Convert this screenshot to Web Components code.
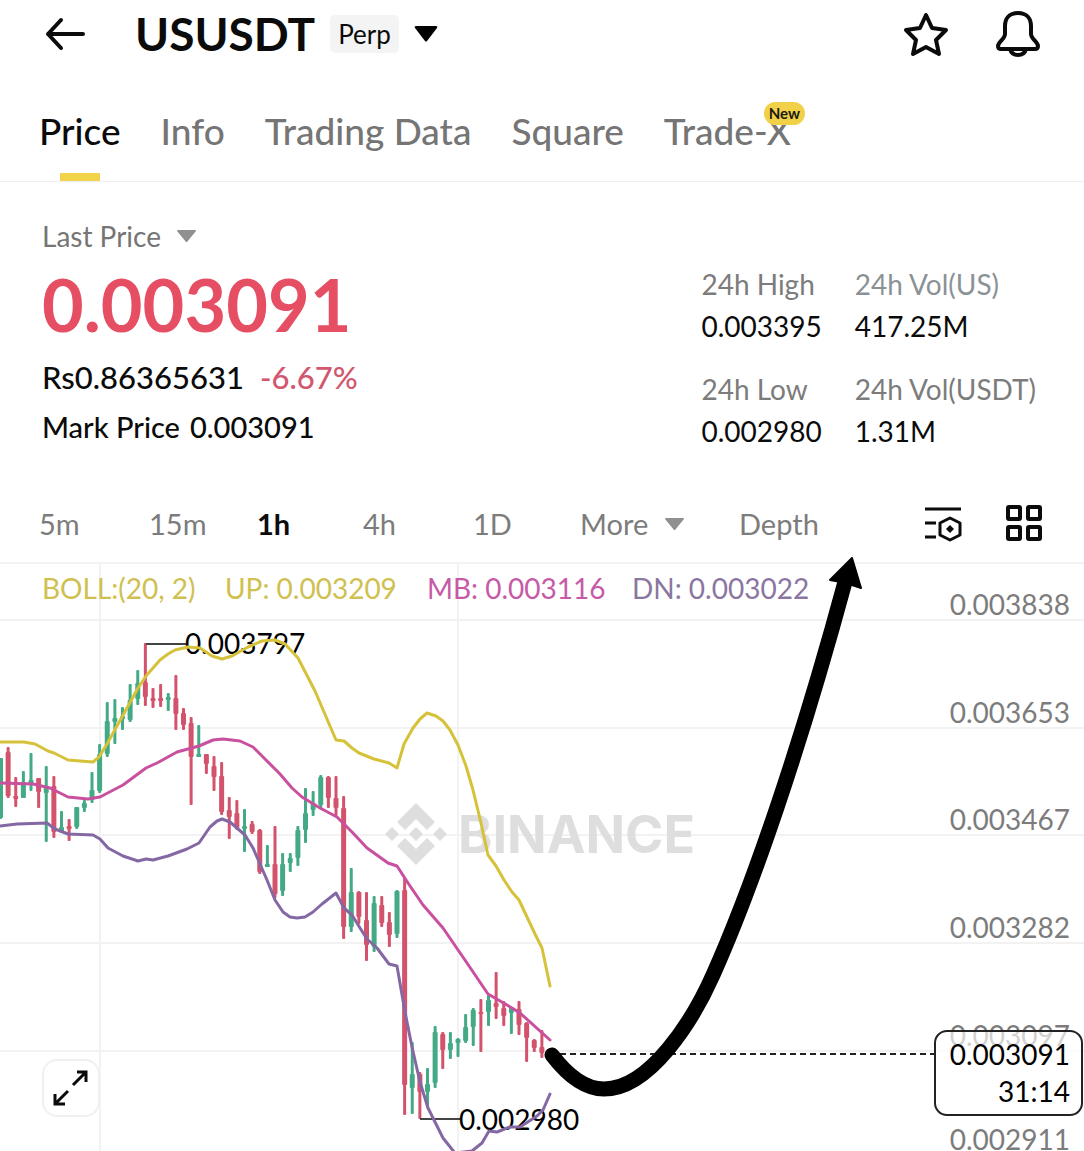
<!DOCTYPE html>
<html lang="en">
<head>
<meta charset="utf-8">
<meta name="viewport" content="width=device-width, initial-scale=1">
<title>USUSDT Perp</title>
<style>
    body {
        margin: 0;
        background: #fff;
        color: #0b0b0b;
        font-family: Lato, "Liberation Sans", sans-serif;
        overflow-x: hidden;
    }
</style>
</head>
<body>
<market-header symbol="USUSDT" kind="Perp"></market-header>
<tab-bar>
    <tab-item active>Price</tab-item>
    <tab-item>Info</tab-item>
    <tab-item>Trading Data</tab-item>
    <tab-item>Square</tab-item>
    <tab-item badge="New">Trade-X</tab-item>
</tab-bar>
<price-summary>
    <span slot="price">0.003091</span>
    <span slot="fiat">Rs0.86365631</span>
    <span slot="change">-6.67%</span>
    <span slot="mark">0.003091</span>
    <stat-item label="24h High">0.003395</stat-item>
    <stat-item label="24h Vol(US)" muted>417.25M</stat-item>
    <stat-item label="24h Low">0.002980</stat-item>
    <stat-item label="24h Vol(USDT)">1.31M</stat-item>
</price-summary>
<interval-bar></interval-bar>
<market-chart></market-chart>

<script>
class BaseElement extends HTMLElement {
    constructor() {
        super();
        const shadow = this.attachShadow({ mode: 'open' });
        const template = document.createElement('template');
        template.innerHTML = this.template();
        shadow.appendChild(template.content.cloneNode(true));
    }
}

const resetStyles = `
    button, select {
        margin: 0;
        padding: 0;
        border: 0;
        background: none;
        color: inherit;
        font: inherit;
        cursor: pointer;
    }
    select {
        appearance: none;
        outline: none;
    }
    svg { display: block; }
`;

class MarketHeader extends BaseElement {
    template() {
        return `
            <style>
                ${resetStyles}
                :host { display: block; }
                header {
                    display: flex;
                    align-items: center;
                    height: 68px;
                    padding: 0 43px 0 45px;
                }
                h1 {
                    margin: 0 15px 0 48px;
                    font-size: 46px;
                    line-height: 56px;
                    font-weight: 700;
                }
                .kind {
                    padding: 0 8px;
                    border-radius: 5px;
                    background: #f4f4f4;
                    font-size: 26px;
                    line-height: 38px;
                }
                .caret { margin-left: 15px; }
                .actions {
                    display: flex;
                    gap: 46px;
                    margin-left: auto;
                }
            </style>
            <header>
                <button aria-label="Back">
                    <svg width="42" height="34" viewBox="0 0 42 34" fill="none" stroke="currentColor" stroke-width="4" stroke-linecap="round" stroke-linejoin="round">
                        <path d="M38 17H3M16 3L3 17l13 14"/>
                    </svg>
                </button>
                <h1></h1>
                <span class="kind"></span>
                <button class="caret" aria-label="Choose market">
                    <svg width="24" height="18" viewBox="0 0 24 18"><path d="M2 1h20q2 0 1 2L13 16q-1 1-2 0L1 3Q0 1 2 1z"/></svg>
                </button>
                <div class="actions">
                    <button aria-label="Add to favourites">
                        <svg width="46" height="48" viewBox="0 0 46 48" fill="none" stroke="currentColor" stroke-width="4" stroke-linejoin="round">
                            <path d="M23 5l6 13 14 2-10 10 3 14-13-7-13 7 3-14L3 20l14-2z"/>
                        </svg>
                    </button>
                    <button aria-label="Price alerts">
                        <svg width="46" height="48" viewBox="0 0 46 48" fill="none" stroke="currentColor" stroke-width="4" stroke-linejoin="round">
                            <path d="M23 3C14 3 10 9 10 16v8c0 5-7 8-7 12 0 2 1 3 3 3h34c2 0 3-1 3-3 0-4-7-7-7-12v-8C36 9 32 3 23 3z"/>
                            <path d="M15 39c1 4 4 6 8 6s7-2 8-6"/>
                        </svg>
                    </button>
                </div>
            </header>
        `;
    }
    connectedCallback() {
        this.shadowRoot.querySelector('h1').textContent = this.getAttribute('symbol');
        this.shadowRoot.querySelector('.kind').textContent = this.getAttribute('kind');
    }
}

class TabBar extends BaseElement {
    template() {
        return `
            <style>
                :host { display: block; }
                nav {
                    display: flex;
                    gap: 40px;
                    height: 113px;
                    padding: 0 39px;
                    border-bottom: 1px solid #efefef;
                }
            </style>
            <nav aria-label="Market sections"><slot></slot></nav>
        `;
    }
}

class TabItem extends BaseElement {
    template() {
        return `
            <style>
                :host {
                    display: block;
                    position: relative;
                    color: #757575;
                }
                :host([active]) { color: #0b0b0b; }
                a {
                    display: block;
                    padding-top: 40px;
                    color: inherit;
                    font-size: 37px;
                    line-height: 46px;
                    font-weight: 500;
                    text-decoration: none;
                    white-space: nowrap;
                }
                :host([active]) a::after {
                    content: "";
                    display: block;
                    width: 40px;
                    height: 8px;
                    margin: 19px auto 0;
                    background: #f1d449;
                }
                .badge {
                    position: absolute;
                    top: 34px;
                    right: -14px;
                    padding: 0 5px;
                    border-radius: 12px;
                    background: #f1d147;
                    color: #1c1a10;
                    font-size: 15px;
                    line-height: 23px;
                    font-weight: 700;
                }
                .badge:empty { display: none; }
            </style>
            <a href="#"><slot></slot></a>
            <span class="badge"></span>
        `;
    }
    connectedCallback() {
        this.shadowRoot.querySelector('.badge').textContent = this.getAttribute('badge') || '';
    }
}

class PriceSummary extends BaseElement {
    template() {
        return `
            <style>
                ${resetStyles}
                :host { display: block; }
                section {
                    display: flex;
                    justify-content: space-between;
                    align-items: flex-end;
                    padding: 34px 48px 34px 42px;
                }
                .source {
                    display: flex;
                    align-items: center;
                    gap: 16px;
                    color: #757575;
                    font-size: 28px;
                    line-height: 40px;
                }
                .price {
                    color: #e64e63;
                    font-size: 72px;
                    line-height: 96px;
                    font-weight: 700;
                }
                .row {
                    display: flex;
                    gap: 16px;
                    font-size: 31px;
                    line-height: 50px;
                    font-weight: 500;
                }
                .row.mark {
                    gap: 10px;
                    font-size: 29px;
                }
                .change { color: #d3566f; }
                .stats {
                    display: grid;
                    grid-template-columns: auto auto;
                    gap: 21px 33px;
                }
            </style>
            <section>
                <div>
                    <div class="source">
                        <select aria-label="Price type"><option>Last Price</option></select>
                        <svg width="19" height="13" viewBox="0 0 19 13" fill="#909090"><path d="M1 0h17q1 0 1 1l-9 11H9L0 1q0-1 1-1z"/></svg>
                    </div>
                    <div class="price"><slot name="price"></slot></div>
                    <div class="row"><slot name="fiat"></slot><span class="change"><slot name="change"></slot></span></div>
                    <div class="row mark"><span>Mark Price</span><slot name="mark"></slot></div>
                </div>
                <div class="stats"><slot></slot></div>
            </section>
        `;
    }
}

class StatItem extends BaseElement {
    template() {
        return `
            <style>
                :host {
                    display: block;
                    font-size: 28px;
                    line-height: 42px;
                    white-space: nowrap;
                }
                .label { color: #7c7c7c; }
                :host([muted]) .label { color: #8b9296; }
            </style>
            <div class="label"></div>
            <div><slot></slot></div>
        `;
    }
    connectedCallback() {
        this.shadowRoot.querySelector('.label').textContent = this.getAttribute('label');
    }
}

class IntervalBar extends BaseElement {
    template() {
        return `
            <style>
                ${resetStyles}
                :host { display: block; }
                nav {
                    display: grid;
                    grid-template-columns: 110fr 108fr 106fr 110fr 107fr 159fr 185fr 82fr 36px;
                    align-items: center;
                    justify-items: start;
                    height: 76px;
                    padding: 0 42px 0 39px;
                    color: #7c7c7c;
                    font-size: 29px;
                    line-height: 40px;
                }
                .active {
                    color: #0b0b0b;
                    font-weight: 700;
                }
                .more {
                    display: flex;
                    align-items: center;
                    gap: 16px;
                }
                .tool { color: #0b0b0b; }
            </style>
            <nav aria-label="Chart interval">
                <button>5m</button>
                <button>15m</button>
                <button class="active">1h</button>
                <button>4h</button>
                <button>1D</button>
                <div class="more">
                    <select aria-label="More intervals"><option>More</option></select>
                    <svg width="19" height="13" viewBox="0 0 19 13" fill="#909090"><path d="M1 0h17q1 0 1 1l-9 11H9L0 1q0-1 1-1z"/></svg>
                </div>
                <button>Depth</button>
                <button class="tool" aria-label="Chart settings">
                    <svg width="38" height="36" viewBox="0 0 38 36" fill="none" stroke="currentColor" stroke-width="3">
                        <path d="M1 3h36M1 17h11M1 31h11"/>
                        <path d="M26 12l10 5v12l-10 5-10-5V17z" stroke-linejoin="round"/>
                        <path d="M26 19l4 4-4 4-4-4z" fill="currentColor" stroke="none"/>
                    </svg>
                </button>
                <button class="tool" aria-label="Layout">
                    <svg width="36" height="38" viewBox="0 0 36 38" fill="none" stroke="currentColor" stroke-width="4">
                        <rect x="2" y="2" width="12" height="12" rx="1"/>
                        <rect x="22" y="2" width="12" height="12" rx="1"/>
                        <rect x="2" y="22" width="12" height="12" rx="1"/>
                        <rect x="22" y="22" width="12" height="12" rx="1"/>
                    </svg>
                </button>
            </nav>
        `;
    }
}

// direction, high, body top, body bottom, low
const candles = [
    ['u', 758, 758, 818, 819], ['d', 747, 752, 796, 798], ['d', 777, 796, 799, 807],
    ['u', 771, 782, 798, 798], ['u', 753, 780, 784, 791], ['d', 778, 778, 792, 808],
    ['u', 766, 786, 793, 842], ['d', 776, 786, 832, 838], ['u', 811, 827, 832, 833],
    ['d', 819, 826, 829, 841], ['u', 807, 807, 827, 829], ['u', 800, 803, 808, 812],
    ['u', 772, 790, 800, 803], ['u', 744, 754, 791, 793], ['u', 702, 721, 754, 757],
    ['u', 699, 718, 722, 744], ['u', 707, 716, 719, 730], ['u', 684, 700, 720, 722],
    ['u', 670, 683, 699, 705], ['d', 643, 682, 697, 706], ['d', 688, 698, 701, 708],
    ['d', 684, 698, 701, 707], ['u', 693, 697, 700, 711], ['d', 675, 698, 714, 730],
    ['d', 708, 713, 725, 730], ['d', 717, 723, 757, 805], ['u', 725, 754, 757, 757],
    ['d', 754, 754, 764, 774], ['d', 756, 766, 777, 791], ['d', 762, 776, 812, 815],
    ['d', 797, 810, 817, 839], ['d', 800, 813, 828, 830], ['u', 809, 826, 829, 852],
    ['d', 821, 824, 832, 834], ['d', 829, 830, 872, 874], ['u', 845, 864, 867, 867],
    ['d', 826, 864, 894, 898], ['u', 853, 864, 891, 896], ['u', 853, 858, 863, 872],
    ['u', 826, 830, 858, 866], ['u', 788, 813, 830, 843], ['u', 791, 803, 810, 816],
    ['u', 775, 777, 805, 808], ['d', 776, 777, 798, 808], ['d', 776, 798, 808, 816],
    ['d', 796, 808, 927, 939], ['u', 868, 892, 927, 932], ['d', 891, 892, 917, 924],
    ['d', 892, 920, 945, 961], ['u', 896, 903, 947, 952], ['d', 896, 905, 923, 927],
    ['d', 912, 922, 935, 947], ['u', 890, 891, 934, 938], ['d', 878, 890, 1085, 1115],
    ['u', 1042, 1074, 1088, 1114], ['d', 1072, 1074, 1092, 1119], ['u', 1068, 1084, 1092, 1108],
    ['u', 1026, 1032, 1083, 1088], ['d', 1032, 1034, 1050, 1069], ['u', 1032, 1043, 1050, 1059],
    ['u', 1038, 1039, 1043, 1057], ['u', 1014, 1027, 1041, 1043], ['u', 1008, 1010, 1027, 1046],
    ['d', 999, 1012, 1014, 1052], ['u', 995, 1000, 1012, 1026], ['d', 972, 1003, 1007, 1019],
    ['d', 1001, 1008, 1016, 1026], ['u', 1007, 1008, 1013, 1034], ['d', 1001, 1009, 1025, 1035],
    ['d', 1022, 1023, 1038, 1062], ['d', 1039, 1040, 1048, 1052], ['d', 1030, 1047, 1053, 1058]
];

const bands = {
    up: '0,742 24,742 35,744 48,751 54,753 68,760 80,761 93,762 99,757 107,744 122,717 138,688 146,676 160,660 168,654 175,650 188,647 200,648 212,656 222,659 232,656 248,647 262,641 275,640 285,644 298,658 315,691 336,740 344,741 352,748 359,753 374,759 389,763 397,768 404,744 413,728 420,719 427,713 436,716 443,721 450,730 458,745 466,766 473,790 481,823 488,855 496,866 504,880 512,892 519,900 527,917 535,934 542,948 550,986',
    mid: '0,783 33,784 50,788 68,797 88,799 100,797 123,785 146,768 157,763 177,752 199,746 213,740 223,739 240,741 253,747 265,759 280,774 292,788 302,797 320,808 337,817 352,832 367,848 388,863 397,866 408,883 423,905 443,928 467,963 488,994 512,1008 520,1013 550,1040',
    down: '0,826 17,824 47,823 55,829 68,834 93,835 100,839 108,848 123,856 138,861 146,859 153,860 168,856 187,849 199,843 210,827 217,821 222,819 230,822 245,835 253,848 267,880 275,900 283,912 290,917 297,918 305,917 313,912 322,904 336,893 344,908 352,915 360,928 367,939 377,948 389,964 397,966 405,1012 412,1047 420,1082 428,1108 443,1138 455,1153 472,1151 482,1143 489,1131 497,1132 510,1127 520,1127 537,1116 543,1110 550,1094'
};

// gridline, label baseline, label
const levels = [
    [620, 615, '0.003838'], [728, 723, '0.003653'], [835, 830, '0.003467'],
    [943, 938, '0.003282'], [1051, 1046, '0.003097'], [1159, 1150, '0.002911']
];

class MarketChart extends BaseElement {
    template() {
        return `
            <style>
                ${resetStyles}
                :host {
                    display: block;
                    position: relative;
                }
                /* the trend arrow reaches a little above the top rule */
                .chart {
                    width: 100%;
                    height: auto;
                    margin-top: -10px;
                    font-size: 28px;
                    pointer-events: none;
                }
                .grid { stroke: #f2f2f2; stroke-width: 2; }
                .axis { fill: #7c7c7c; text-anchor: end; }
                .last { text-anchor: end; }
                .u { fill: #43aa85; }
                .d { fill: #d4536c; }
                polyline {
                    fill: none;
                    stroke-width: 3;
                    stroke-linejoin: round;
                    stroke-linecap: round;
                }
                .up { stroke: #d6c23a; }
                .mid { stroke: #c9509f; }
                .down { stroke: #8468a4; }
                .brand {
                    font-family: Inter, "Liberation Sans", sans-serif;
                    font-size: 52px;
                    font-weight: 700;
                }
                .expand {
                    position: absolute;
                    left: 42px;
                    bottom: 34px;
                    padding: 9px;
                    border: 2px solid #f0f0f0;
                    border-radius: 15px;
                    background: #fff;
                }
            </style>
            <svg class="chart" viewBox="0 552 1084 599" role="img" aria-label="USUSDT one hour candles with Bollinger bands">
                <g class="grid">
                    <path d="M0 563H1084M100 563V1151M458 563V1151"/>
                    <path class="rows"/>
                </g>
                <g fill="#dedede">
                    <path d="M416 803l19 19-8 8-11-11-11 11-8-8z"/>
                    <path d="M416 865l19-19-8-8-11 11-11-11-8 8z"/>
                    <path d="M416 827l7 7-7 7-7-7zM392 827l7 7-7 7-7-7zM440 827l7 7-7 7-7-7z"/>
                    <text class="brand" x="458" y="853">BINANCE</text>
                </g>
                <g>
                    <text x="42" y="599" fill="#cfc04f">BOLL:(20, 2)</text>
                    <text x="225" y="599" fill="#cfc04f">UP: 0.003209</text>
                    <text x="427" y="599" fill="#c65aa6">MB: 0.003116</text>
                    <text x="632" y="599" fill="#8a76a0">DN: 0.003022</text>
                </g>
                <g class="axis"></g>
                <g class="candles"></g>
                <path d="M146 644H186M420 1119H460" fill="none" stroke="#444" stroke-width="2"/>
                <text x="185" y="654">0.003797</text>
                <text x="459" y="1130">0.002980</text>
                <polyline class="up"/>
                <polyline class="mid"/>
                <polyline class="down"/>
                <path d="M560 1054H935" stroke="#222" stroke-width="2" stroke-dasharray="6 4"/>
                <rect x="935" y="1031" width="147" height="84" rx="12" fill="#fff" fill-opacity=".65" stroke="#222" stroke-width="2"/>
                <text class="last" x="1070" y="1065">0.003091</text>
                <text class="last" x="1070" y="1102">31:14</text>
                <path d="M552 1055C568 1076 586 1089 604 1089C650 1089 693 1020 713 975C752 888 800 748 845 582" fill="none" stroke="#000" stroke-width="15" stroke-linecap="round"/>
                <path d="M852 558L861 588L846 583L830 580z" stroke="#000" stroke-width="2" stroke-linejoin="round"/>
            </svg>
            <button class="expand" aria-label="Full screen">
                <svg width="36" height="36" viewBox="0 0 36 36" fill="none" stroke="#0b0b0b" stroke-width="3">
                    <path d="M20 15L33 2M24 2h9v10M15 21L2 34M2 24v10h10"/>
                </svg>
            </button>
        `;
    }
    connectedCallback() {
        const root = this.shadowRoot;
        root.querySelector('.rows').setAttribute('d', levels.map(([y]) => `M0 ${y}H1084`).join(''));
        root.querySelector('.axis').innerHTML = levels
            .map(([, y, label]) => `<text x="1070" y="${y}">${label}</text>`)
            .join('');
        root.querySelector('.candles').innerHTML = candles.map(([dir, high, top, bottom, low], i) => {
            const x = 0.5 + i * 7.625;
            return `<g class="${dir}">
                <rect x="${x - 1.5}" y="${high}" width="3" height="${low - high}" rx="1"/>
                <rect x="${x - 2.5}" y="${top}" width="5" height="${bottom - top}" rx="1"/>
            </g>`;
        }).join('');
        for (const name in bands) {
            root.querySelector('.' + name).setAttribute('points', bands[name]);
        }
    }
}

customElements.define('market-header', MarketHeader);
customElements.define('tab-item', TabItem);
customElements.define('tab-bar', TabBar);
customElements.define('stat-item', StatItem);
customElements.define('price-summary', PriceSummary);
customElements.define('interval-bar', IntervalBar);
customElements.define('market-chart', MarketChart);
</script>
</body>
</html>
